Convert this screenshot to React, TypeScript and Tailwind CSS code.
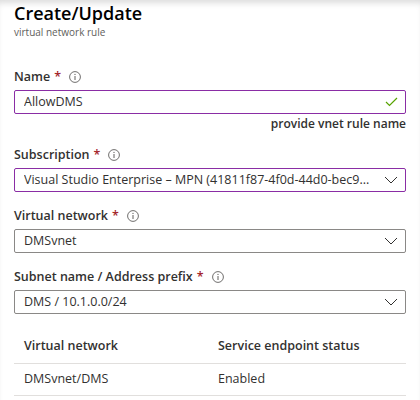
import {ReactNode} from "react";

const InfoIcon = () => (
    <svg width="12" height="12" viewBox="0 0 12 12" className="ml-[8px] shrink-0">
        <circle cx="6" cy="6" r="5.4" fill="none" stroke="#605e5c" strokeWidth="0.9"/>
        <line x1="6" y1="5" x2="6" y2="9" stroke="#605e5c" strokeWidth="1"/>
        <circle cx="6" cy="3.4" r="0.6" fill="#605e5c"/>
    </svg>
);

const Chevron = () => (
    <svg width="14" height="8" viewBox="0 0 14 8" className="shrink-0">
        <polyline points="1,1 7,7 13,1" fill="none" stroke="#323130" strokeWidth="1"/>
    </svg>
);

const Check = () => (
    <svg width="13" height="10" viewBox="0 0 13 10" className="shrink-0">
        <polyline points="1,5 4.5,8.5 12,1" fill="none" stroke="#57a300" strokeWidth="1.2"/>
    </svg>
);

const Label = ({children, className = ""}: {children: ReactNode; className?: string}) => (
    <div className={`flex items-center h-[20px] text-[12.5px] font-semibold text-[#323130] ${className}`}>
        <span>{children}</span>
        <span className="ml-[4px] text-[#a4262c]">*</span>
        <InfoIcon/>
    </div>
);

const Field = ({value, purple, icon}: {value: string; purple?: boolean; icon: ReactNode}) => (
    <div className={`mt-[3px] h-[24px] flex items-center pl-[9px] pr-[7px] rounded-[2px] border ${purple ? "border-[#8a2da5]" : "border-[#8a8886]"}`}>
        <span className="flex-1 whitespace-nowrap overflow-hidden text-[12.5px] text-[#323130]">{value}</span>
        <span className="ml-[8px]">{icon}</span>
    </div>
);

export default function App() {
    return (
        <div className="w-[420px] h-[400px] bg-white px-[14px] pt-[1px] shadow-[inset_0_6px_6px_-3px_rgba(0,0,0,0.14)] font-['Segoe_UI','Open_Sans',sans-serif] overflow-hidden">
            <h1 className="text-[18px] leading-[24px] font-semibold text-black">Create/Update</h1>
            <p className="text-[10px] leading-[14px] text-[#605e5c]">virtual network rule</p>

            <Label className="mt-[28px]">Name</Label>
            <Field value="AllowDMS" purple icon={<Check/>}/>
            <div className="mt-[2px] h-[16px] text-[12px] leading-[16px] font-semibold text-[#323130] text-right">
                provide vnet rule name
            </div>

            <Label className="mt-[13px]">Subscription</Label>
            <Field value="Visual Studio Enterprise – MPN (41811f87-4f0d-44d0-bec9..." purple icon={<Chevron/>}/>

            <Label className="mt-[14px]">Virtual network</Label>
            <Field value="DMSvnet" icon={<Chevron/>}/>

            <Label className="mt-[14px]">Subnet name / Address prefix</Label>
            <Field value="DMS / 10.1.0.0/24" icon={<Chevron/>}/>

            <div className="mt-[15px] text-[12.5px] text-[#323130]">
                <div className="flex h-[35px] items-center border-b border-[#e1dfdd] font-semibold">
                    <div className="w-[194px] pl-[10px]">Virtual network</div>
                    <div className="pl-[10px]">Service endpoint status</div>
                </div>
                <div className="flex h-[32px] items-center border-b border-[#e1dfdd]">
                    <div className="w-[194px] pl-[10px]">DMSvnet/DMS</div>
                    <div className="pl-[10px]">Enabled</div>
                </div>
            </div>
        </div>
    );
}
